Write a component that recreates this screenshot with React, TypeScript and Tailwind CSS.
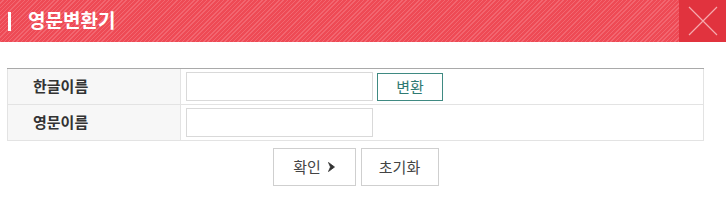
import React from "react";

export default function App() {
  return (
    <div className="w-[726px] h-[217px] bg-white" style={{ fontFamily: '"Noto Sans CJK KR", "Noto Sans", sans-serif' }}>
      <div className="flex h-[42px] bg-[#ee4a55] bg-[repeating-linear-gradient(135deg,#ee4a55_0px,#ee4a55_2px,#f26670_2px,#f26670_3px)]">
        <div className="flex flex-1 items-center pl-[8px]">
          <div className="w-[3px] h-[19px] bg-white" />
          <span className="ml-[17px] text-[19px] font-bold text-white leading-none -mt-[3px]">영문변환기</span>
        </div>
        <div className="w-[47px] h-[42px] bg-[#e1333e] flex items-center justify-center">
          <svg width="30" height="30" viewBox="0 0 30 30">
            <path d="M1 1 L29 29 M29 1 L1 29" stroke="#f6a9ad" strokeWidth="1.2" fill="none" />
          </svg>
        </div>
      </div>
      <div className="px-[7px] pt-[26px]">
        <div className="w-[697px] border-t border-t-[#a9a9a9]">
          <div className="flex h-[36px] border-b border-[#e3e3e3]">
            <div className="w-[174px] bg-[#f7f7f7] border-l border-r border-[#e3e3e3] flex items-center pl-[25px] text-[15px] font-bold text-[#333]">한글이름</div>
            <div className="flex-1 border-r border-[#e3e3e3] flex items-center pl-[5px] gap-[4px]">
              <div className="w-[187px] h-[29px] border border-[#d9d9d9] bg-white" />
              <button className="w-[66px] h-[28px] border border-[#3f8a82] text-[#2f7a72] text-[15px] bg-white leading-none">변환</button>
            </div>
          </div>
          <div className="flex h-[36px] border-b border-[#e3e3e3]">
            <div className="w-[174px] bg-[#f7f7f7] border-l border-r border-[#e3e3e3] flex items-center pl-[25px] text-[15px] font-bold text-[#333]">영문이름</div>
            <div className="flex-1 border-r border-[#e3e3e3] flex items-center pl-[5px]">
              <div className="w-[187px] h-[29px] border border-[#d9d9d9] bg-white" />
            </div>
          </div>
        </div>
        <div className="w-[697px] flex justify-center gap-[5px] pt-[7px]">
          <button className="w-[83px] h-[38px] border border-[#cfcfcf] bg-white text-[15px] text-[#444] flex items-center justify-center gap-[7px]">
            <span>확인</span>
            <svg width="7" height="10" viewBox="0 0 7 10"><path d="M0.5 0.5 L6.5 5 L0.5 9.5 L2.5 5 Z" fill="#333" stroke="#333" strokeWidth="0.8" strokeLinejoin="round" /></svg>
          </button>
          <button className="w-[78px] h-[38px] border border-[#cfcfcf] bg-white text-[15px] text-[#444] flex items-center justify-center">초기화</button>
        </div>
      </div>
    </div>
  );
}
